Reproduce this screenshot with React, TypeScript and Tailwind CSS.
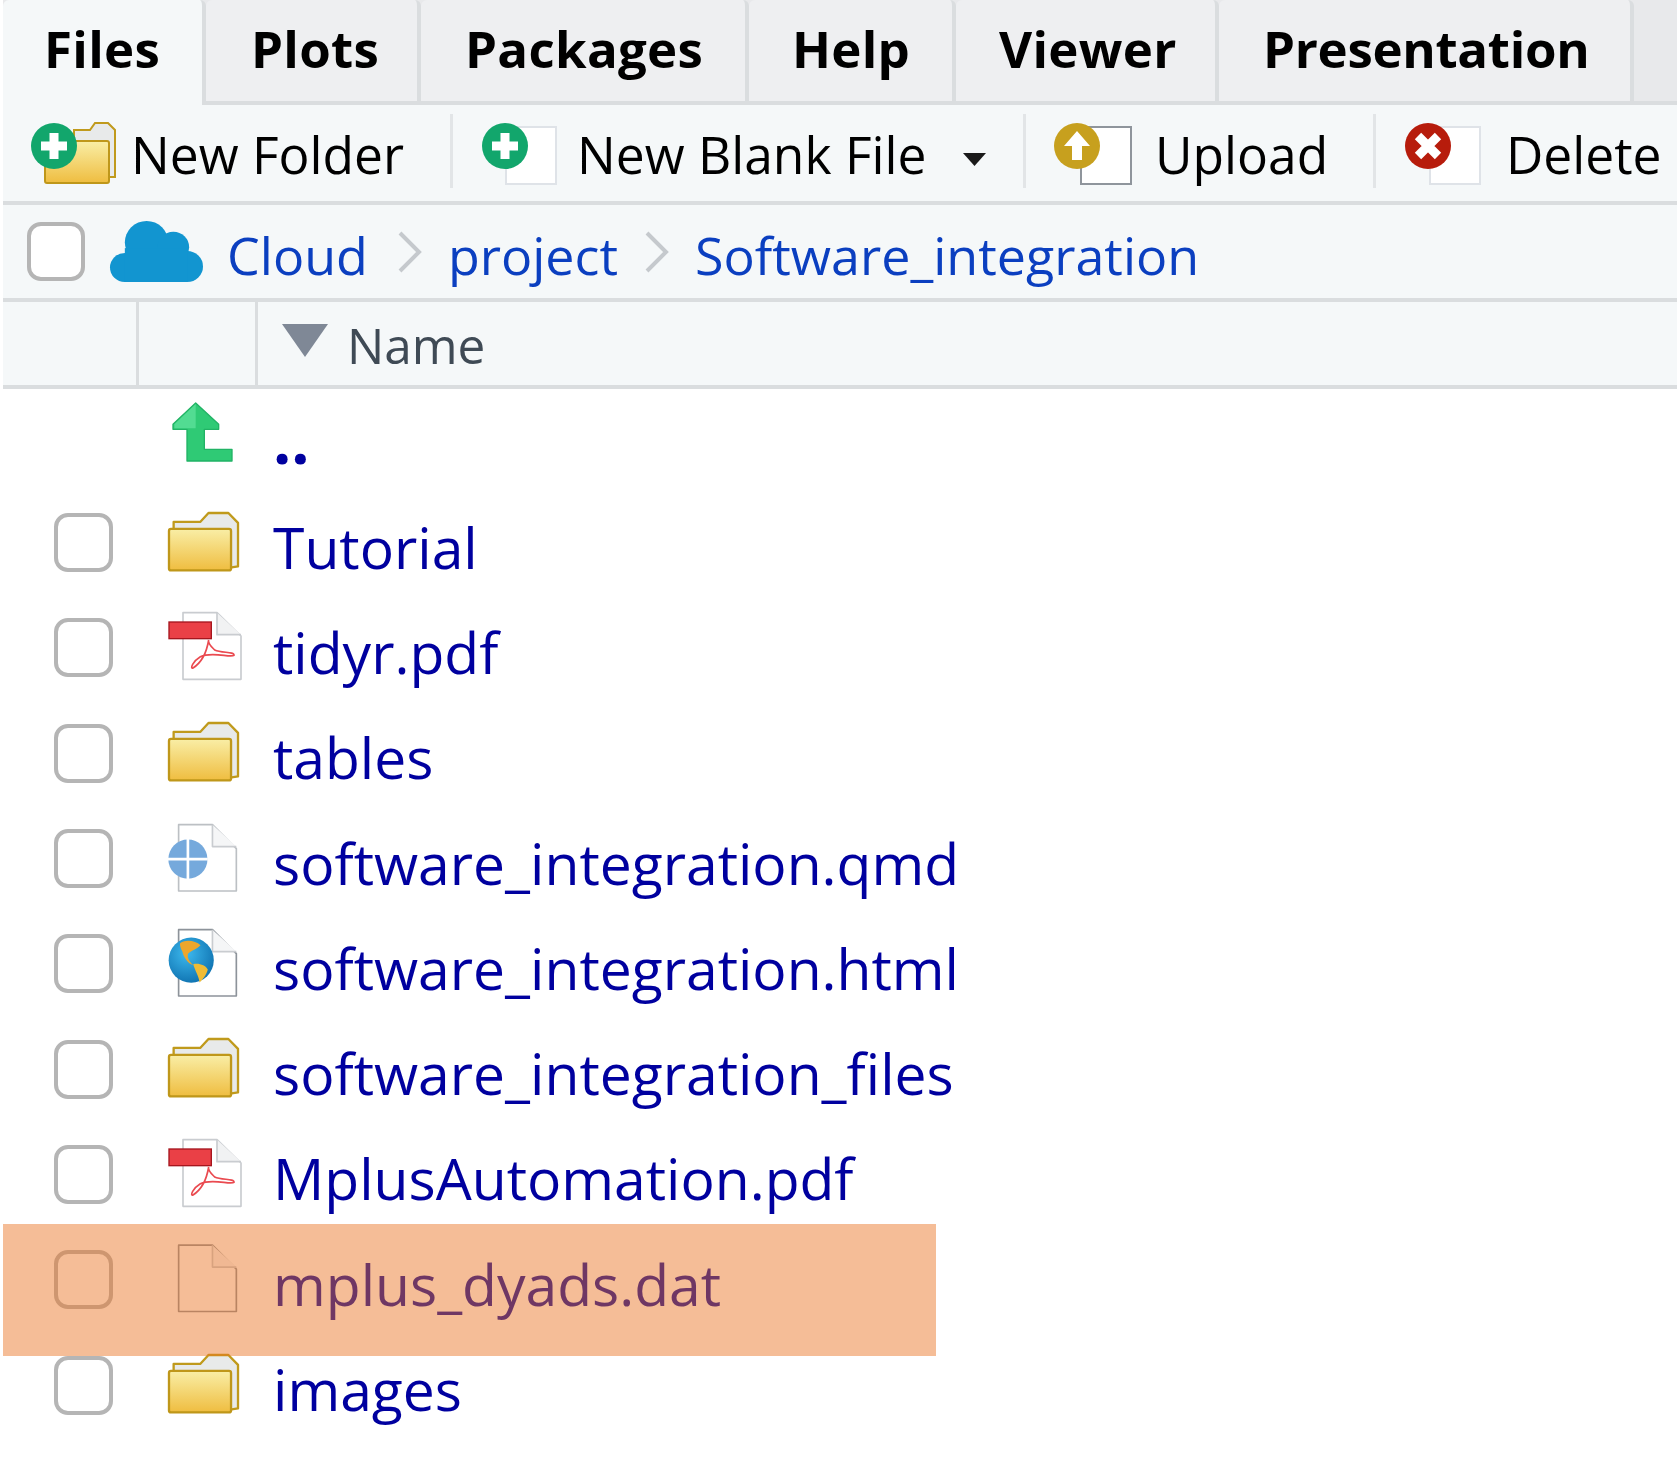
import React from "react";

const uiFont = { fontFamily: '"Open Sans", "Noto Sans", sans-serif' };

const tabs = [
  { label: "Files", width: "w-[203px]", pad: "pl-[41px]", track: "tracking-[0.3px] -mt-[9px]" },
  { label: "Plots", width: "w-[215px]", pad: "pl-[45px]", track: "tracking-[0.3px] -mt-[5px]" },
  { label: "Packages", width: "w-[328px]", pad: "pl-[44px]", track: "tracking-[0.3px] -mt-[5px]" },
  { label: "Help", width: "w-[207px]", pad: "pl-[43px]", track: "tracking-[0.3px] -mt-[5px]" },
  { label: "Viewer", width: "w-[263px]", pad: "pl-[43px]", track: "tracking-[0.3px] -mt-[5px]" },
  { label: "Presentation", width: "w-[415px]", pad: "pl-[44px]", track: "tracking-[-0.3px] -mt-[5px]" },
];

const Folder = () => (
  <svg width="73" height="61" viewBox="500 360 220 182">
    <defs>
      <linearGradient id="folderFill" x1="0" y1="0" x2="0" y2="1">
        <stop offset="0" stopColor="#f9eea6" />
        <stop offset="1" stopColor="#efbd40" />
      </linearGradient>
    </defs>
    <path
      d="M520 412V392H600L625 365H685L714 395V526L690 530Z"
      fill="#e8eaea"
      stroke="#c09a1c"
      strokeWidth="7"
      strokeLinejoin="round"
    />
    <rect x="506" y="413" width="187" height="125" rx="6" fill="url(#folderFill)" stroke="#bf971a" strokeWidth="7" />
  </svg>
);

const PdfFile = () => (
  <svg width="76" height="70" viewBox="500 655 228 210">
    <path d="M548 660H650L722 730V860H548Z" fill="#fff" stroke="#c9ccd0" strokeWidth="5" strokeLinejoin="round" />
    <path d="M650 660V726H722" fill="#f1f2f3" stroke="#c9ccd0" strokeWidth="5" strokeLinejoin="round" />
    <rect x="506" y="688" width="127" height="50" fill="#ea4046" stroke="#a6161e" strokeWidth="4" />
    <path
      d="M625 742C618 785 600 812 578 826C568 830 578 805 600 792C635 775 690 796 701 788C702 776 665 782 643 772C630 760 622 750 625 742Z"
      fill="none"
      stroke="#ea4a50"
      strokeWidth="5"
    />
  </svg>
);

const PageBack = ({ dark }: { dark?: boolean }) => (
  <>
    <path
      d="M534 93H636L708 165V293H534Z"
      fill="#fff"
      stroke={dark ? "#8d939a" : "#bcc0c4"}
      strokeWidth="5"
      strokeLinejoin="round"
    />
    <path d="M636 93V159H708" fill="#f5f6f7" stroke="#c9ccd0" strokeWidth="5" strokeLinejoin="round" />
  </>
);

const QmdFile = () => (
  <svg width="71" height="69" viewBox="500 88 212 208">
    <PageBack />
    <circle cx="562" cy="197" r="59" fill="#75a9dc" />
    <path d="M562 136V258M502 197H622" stroke="#fff" strokeWidth="8" />
  </svg>
);

const HtmlFile = () => (
  <svg width="71" height="69" viewBox="500 88 212 208">
    <defs>
      <radialGradient id="globeFill" cx="0.4" cy="0.35" r="0.75">
        <stop offset="0" stopColor="#3db9ee" />
        <stop offset="1" stopColor="#0b6cab" />
      </radialGradient>
    </defs>
    <PageBack dark />
    <circle cx="572" cy="185" r="68" fill="url(#globeFill)" />
    <path
      d="M538 135C550 122 585 125 600 140C590 152 572 155 563 165C558 175 566 190 578 200C560 195 548 172 545 158C540 150 538 143 538 135Z"
      fill="#eea62b"
    />
    <path d="M578 197C595 193 615 200 622 213C618 230 605 245 597 252C596 235 583 215 578 197Z" fill="#eebb35" />
  </svg>
);

const PlainFile = () => (
  <svg width="63" height="70" viewBox="526 88 190 208" className="ml-[9px]">
    <PageBack dark />
  </svg>
);

const UpFolder = () => (
  <svg width="61" height="60" viewBox="515 38 183 180">
    <path
      d="M586 41L655 105V120H612V180H695V215H560V120H518V105Z"
      fill="#2fca75"
      stroke="#21b365"
      strokeWidth="4"
      strokeLinejoin="round"
    />
    <path d="M586 44L522 105V117H586Z" fill="#52dc92" />
  </svg>
);

const Badge = ({ color, kind }: { color: string; kind: "plus" | "up" | "x" }) => (
  <svg width="48" height="48" viewBox="0 0 48 48" className="absolute top-0 left-0">
    <circle cx="24" cy="24" r="23" fill={color} />
    {kind === "plus" && <path d="M24 11V37M11 24H37" stroke="#fff" strokeWidth="9" />}
    {kind === "up" && <path d="M24 9L37 24H29V38H19V24H11Z" fill="#fff" />}
    {kind === "x" && <path d="M14 14L34 34M34 14L14 34" stroke="#fff" strokeWidth="9" />}
  </svg>
);

const BlankPage = ({ left, border }: { left: string; border: string }) => (
  <div className={`absolute ${left} bottom-0 w-[52px] h-[59px] bg-white border-2 ${border}`} />
);

const ToolbarButton = ({
  icon,
  iconWidth,
  label,
  width,
  divider = true,
}: {
  icon: React.ReactNode;
  iconWidth: string;
  label: string;
  width: string;
  divider?: boolean;
}) => (
  <div className={`${width} h-full flex items-center relative`}>
    <div className={`${iconWidth} h-[63px] relative shrink-0`}>{icon}</div>
    <span className="text-[51.5px] font-medium leading-none mt-[3px] text-black whitespace-nowrap">{label}</span>
    {divider && <div className="absolute right-0 top-[9px] h-[74px] w-[3px] bg-[#e2e5e7]" />}
  </div>
);

const rows: { name: string; icon: React.ReactNode }[] = [
  { name: "Tutorial", icon: <Folder /> },
  { name: "tidyr.pdf", icon: <PdfFile /> },
  { name: "tables", icon: <Folder /> },
  { name: "software_integration.qmd", icon: <QmdFile /> },
  { name: "software_integration.html", icon: <HtmlFile /> },
  { name: "software_integration_files", icon: <Folder /> },
  { name: "MplusAutomation.pdf", icon: <PdfFile /> },
  { name: "mplus_dyads.dat", icon: <PlainFile /> },
  { name: "images", icon: <Folder /> },
];

const Checkbox = ({ small }: { small?: boolean }) => (
  <div
    className={`${small ? "w-[58px]" : "w-[59px]"} h-[59px] rounded-[14px] border-[4px] border-[#b5b5b5] bg-white shrink-0`}
  />
);

export default function App() {
  return (
    <div className="w-[1677px] h-[1475px] bg-white pl-[3px] overflow-hidden relative" style={uiFont}>
      {/* tab strip */}
      <div className="h-[105px] flex bg-[#e8e9eb] border-b-[4px] border-[#dadddf]">
        {tabs.map((t, i) => (
          <div
            key={t.label}
            className={`${t.width} ${t.pad} flex items-center font-bold text-[51px] text-black border-r-[4px] rounded-t-md ${
              i === 0 ? "bg-[#f5f8f9] border-[#dadddf] h-[105px]" : "bg-[#eeeff1] border-[#dadddf]"
            }`}
          >
            <span className={`leading-none ${t.track}`}>{t.label}</span>
          </div>
        ))}
      </div>

      {/* toolbar */}
      <div className="h-[100px] bg-[#f5f8f9] border-b-[4px] border-[#dadddf] flex items-center pl-[27px]">
        <ToolbarButton
          width="w-[423px]"
          iconWidth="w-[101px]"
          label="New Folder"
          icon={
            <>
              <svg width="86" height="62" viewBox="0 0 86 62" className="absolute top-0 left-0">
                <path d="M44 20V8H60L65 1H78L85 8V55H70Z" fill="#e8eaea" stroke="#c09a1c" strokeWidth="2" />
                <rect x="15" y="19" width="64" height="42" rx="2" fill="url(#folderFill)" stroke="#bf971a" strokeWidth="2" />
              </svg>
              <Badge color="#12a66c" kind="plus" />
            </>
          }
        />
        <ToolbarButton
          width="w-[573px]"
          iconWidth="w-[124px]"
          label="New Blank File"
          icon={
            <>
              <BlankPage left="left-[52px]" border="border-[#dfe3e8]" />
              <div className="absolute left-[28px] top-0">
                <Badge color="#12a66c" kind="plus" />
              </div>
              <svg width="23" height="13" viewBox="0 0 23 13" className="absolute left-[510px] top-[31px]">
                <path d="M0 0H23L11.5 13Z" fill="#1a1a1a" />
              </svg>
            </>
          }
        />
        <ToolbarButton
          width="w-[350px]"
          iconWidth="w-[129px]"
          label="Upload"
          icon={
            <>
              <BlankPage left="left-[54px]" border="border-[#8f959c]" />
              <div className="absolute left-[27px] top-0">
                <Badge color="#c7a01e" kind="up" />
              </div>
            </>
          }
        />
        <ToolbarButton
          width="w-[300px]"
          iconWidth="w-[130px]"
          label="Delete"
          divider={false}
          icon={
            <>
              <BlankPage left="left-[53px]" border="border-[#dfe3e8]" />
              <div className="absolute left-[28px] top-0">
                <Badge color="#b71c0c" kind="x" />
              </div>
            </>
          }
        />
      </div>

      {/* breadcrumb */}
      <div className="h-[97px] bg-[#f5f8f9] border-b-[4px] border-[#dadddf] flex items-center pl-[24px] text-[52px] font-medium text-[#0b3fc0]">
        <Checkbox small />
        <svg width="94" height="61" viewBox="0 0 95 63" preserveAspectRatio="none" className="ml-[24px] mr-[24px] shrink-0">
          <circle cx="16" cy="48" r="15" fill="#1295d0" />
          <circle cx="38" cy="22" r="22" fill="#1295d0" />
          <circle cx="65" cy="27" r="16" fill="#1295d0" />
          <circle cx="79" cy="47" r="16" fill="#1295d0" />
          <rect x="16" y="28" width="63" height="35" fill="#1295d0" />
        </svg>
        <span className="leading-none mt-[7px]">Cloud</span>
        <svg width="26" height="42" viewBox="0 0 26 42" className="ml-[29px] mr-[25px] shrink-0">
          <path d="M3 2L22 21L3 40" fill="none" stroke="#c5c9cd" strokeWidth="4" />
        </svg>
        <span className="leading-none mt-[7px]">project</span>
        <svg width="26" height="42" viewBox="0 0 26 42" className="ml-[26px] mr-[25px] shrink-0">
          <path d="M3 2L22 21L3 40" fill="none" stroke="#c5c9cd" strokeWidth="4" />
        </svg>
        <span className="leading-none mt-[7px]">Software_integration</span>
      </div>

      {/* column header */}
      <div className="h-[87px] bg-[#f5f8f9] border-b-[4px] border-[#dadddf] flex">
        <div className="w-[136px] border-r-[3px] border-[#dadddf]" />
        <div className="w-[119px] border-r-[3px] border-[#dadddf]" />
        <div className="flex items-center pl-[24px] gap-[19px]">
          <svg width="46" height="33" viewBox="0 0 46 33" className="-mt-[7px]">
            <path d="M0 0H46L23 33Z" fill="#7f8896" />
          </svg>
          <span className="text-[49.5px] leading-none mt-[4px] text-[#3f4a55]">Name</span>
        </div>
      </div>

      {/* file list */}
      <div className="text-[#00009f]">
        <div className="h-[101px] flex items-center pl-[169px]">
          <div className="w-[101px] -mt-[15px]">
            <UpFolder />
          </div>
          <span className="text-[64px] font-bold leading-none mt-[1px]">..</span>
        </div>
        {rows.map((r) => (
          <div key={r.name} className="h-[105.3px] flex items-center">
            <div className="w-[164px] pl-[51px]">
              <Checkbox />
            </div>
            <div className="w-[106px] h-[70px] flex items-center -mt-[3px]">{r.icon}</div>
            <span className="text-[57px] font-medium leading-none mt-[9px] whitespace-nowrap">{r.name}</span>
          </div>
        ))}
      </div>

      {/* hover highlight over the list */}
      <div className="absolute left-[3px] top-[1224px] w-[933px] h-[132px] bg-[#ea7424]/[0.475]" />
    </div>
  );
}
